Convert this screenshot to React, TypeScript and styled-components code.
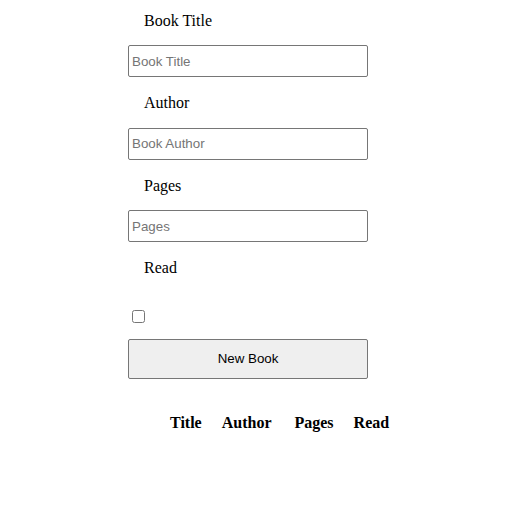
import React from "react";
import styled, { createGlobalStyle } from "styled-components";

const GlobalStyle = createGlobalStyle`
  body {
    margin: 8px;
    font-family: "Liberation Serif", "Times New Roman", serif;
    font-size: 16px;
    color: #000;
    background: #fff;
  }
`;

const Page = styled.div`
  display: flex;
  flex-direction: column;
  align-items: flex-start;
  padding: 2.5px 0 0 120px;
`;

const Form = styled.form`
  display: flex;
  flex-direction: column;
  width: 240px;
`;

const Label = styled.label`
  display: block;
  line-height: 20.5px;
  margin: 0 0 14px 16px;
`;

const TextInput = styled.input`
  box-sizing: border-box;
  width: 240px;
  height: 32px;
  margin: 0 0 16px 0;
  padding: 1px 3px;
  border: 1px solid #767676;
  border-radius: 2px;
  font-family: "Liberation Sans", Arial, sans-serif;
  font-size: 13.33px;
  &::placeholder {
    color: #757575;
  }
`;

const Check = styled.input`
  width: 13px;
  height: 13px;
  margin: 17px 0 16px 4px;
  align-self: flex-start;
`;

const SubmitButton = styled.button`
  box-sizing: border-box;
  width: 240px;
  height: 40px;
  background: #efefef;
  border: 1px solid #767676;
  border-radius: 2px;
  font-family: "Liberation Sans", Arial, sans-serif;
  font-size: 13.33px;
  color: #000;
`;

const Table = styled.table`
  margin: 34px 0 0 32px;
  border-collapse: separate;
  border-spacing: 0;
`;

const Th = styled.th<{ $lead?: number }>`
  padding: 0 10px 0 ${(p) => p.$lead ?? 10}px;
  font-weight: bold;
  line-height: 20.5px;
`;

const fields = [
  { label: "Book Title", placeholder: "Book Title", type: "text" },
  { label: "Author", placeholder: "Book Author", type: "text" },
  { label: "Pages", placeholder: "Pages", type: "number" },
];

export default function App() {
  return (
    <>
      <GlobalStyle />
      <Page>
        <Form onSubmit={(e) => e.preventDefault()}>
          {fields.map((f) => (
            <React.Fragment key={f.label}>
              <Label>{f.label}</Label>
              <TextInput type={f.type} placeholder={f.placeholder} />
            </React.Fragment>
          ))}
          <Label>Read</Label>
          <Check type="checkbox" />
          <SubmitButton type="submit">New Book</SubmitButton>
        </Form>
        <Table>
          <thead>
            <tr>
              <Th>Title</Th>
              <Th>Author</Th>
              <Th $lead={13}>Pages</Th>
              <Th>Read</Th>
            </tr>
          </thead>
        </Table>
      </Page>
    </>
  );
}
